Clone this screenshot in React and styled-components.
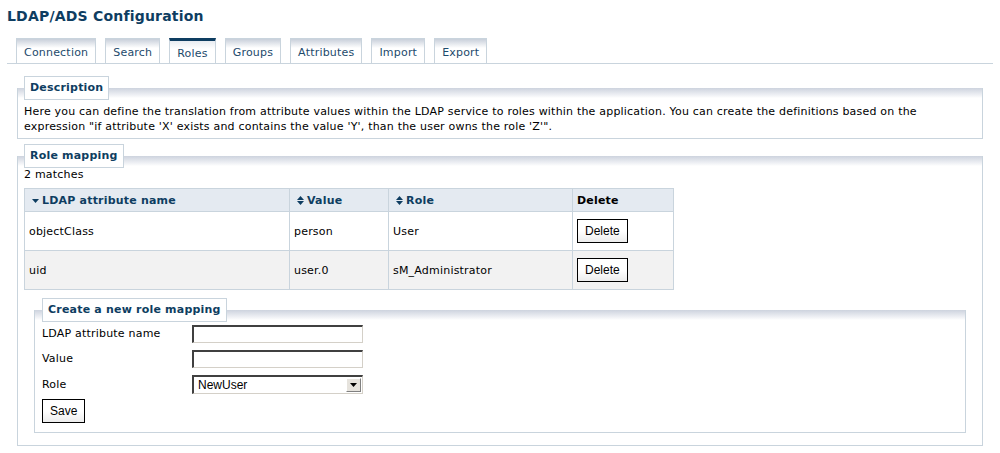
import React from "react";
import styled, { createGlobalStyle } from "styled-components";

const GlobalStyle = createGlobalStyle`
  body {
    margin: 0;
    background: #fff;
    font-family: "DejaVu Sans", Verdana, sans-serif;
    font-size: 11px;
    letter-spacing: 0.2px;
    color: #000;
  }
`;

const Page = styled.div`
  padding: 0 7px;
`;

const Title = styled.h1`
  margin: 0;
  padding-top: 7px;
  font-size: 14px;
  line-height: 18px;
  font-weight: bold;
  color: #0e3d61;
`;

const TabBar = styled.div`
  margin-top: 13px;
  display: flex;
  gap: 9px;
  padding-left: 9px;
  border-bottom: 1px solid #c9d4dd;
`;

const Tab = styled.div`
  height: 25px;
  box-sizing: border-box;
  padding: 3px 7px 0;
  display: flex;
  align-items: center;
  border: 1px solid #c9d4dd;
  border-bottom: 0;
  border-top: ${p => (p.$active ? "3px solid #0e3d61" : "1px solid #c9d4dd")};
  background: ${p =>
    p.$active
      ? "linear-gradient(#e8ecf1, #fff 8px)"
      : "linear-gradient(#c8cfda, #fff 9px)"};
  color: #1d4a6c;
`;

const Section = styled.div`
  margin-top: ${p => p.$top || 0}px;
  margin-left: ${p => p.$inset || 0}px;
  margin-right: ${p => p.$inset || 0}px;
`;

const Legend = styled.div`
  position: relative;
  z-index: 1;
  display: inline-block;
  margin-left: ${p => p.$shift || 7}px;
  height: 24px;
  box-sizing: border-box;
  padding: 0 5px;
  line-height: 22px;
  border: 1px solid #c9d4dd;
  background: #fff;
  font-weight: bold;
  color: #0e3d61;
  vertical-align: top;
`;

const Box = styled.div`
  margin-top: -12px;
  border: 1px solid #c9d4dd;
  border-top: 0;
  background: linear-gradient(#cdd3de, #f4f5f8 8px, #fff 10px);
  padding: ${p => p.$pad};
`;

const Text = styled.p`
  margin: 0;
  line-height: 15px;
  max-width: 900px;
`;

const Matches = styled.div`
  line-height: 14px;
`;

const Table = styled.table`
  margin-top: 6px;
  border-collapse: collapse;
  width: 650px;
`;

const Th = styled.th`
  width: ${p => p.$w}px;
  height: 22px;
  padding: 0 4px;
  text-align: left;
  background: #e4eaf1;
  border: 1px solid #c9d4dd;
  color: ${p => (p.$plain ? "#000" : "#0e3d61")};
  font-weight: bold;
  white-space: nowrap;
`;

const SortIcon = styled.svg`
  margin: 0 3px 0 3px;
  vertical-align: -1px;
`;

const Tr = styled.tr`
  background: ${p => (p.$alt ? "#f2f2f2" : "#fff")};
`;

const Td = styled.td`
  height: 38px;
  padding: 0 4px;
  border: 1px solid #c9d4dd;
`;

const Button = styled.button`
  height: 24px;
  padding: 0 7px;
  border: 1px solid #000;
  background: linear-gradient(#fff, #fff 50%, #ececec);
  font-family: "Liberation Sans", Arial, sans-serif;
  font-size: 12px;
  letter-spacing: 0;
  color: #000;
  border-radius: 0;
  margin-top: ${p => p.$top || 0}px;
`;

const Form = styled.div`
  display: grid;
  grid-template-columns: 150px 171px;
  row-gap: 7px;
  align-items: center;
`;

const Label = styled.label`
  line-height: 18px;
`;

const Input = styled.input`
  width: 171px;
  height: 18px;
  box-sizing: border-box;
  margin: 0;
  border-style: solid;
  border-width: 2px 1px 1px 2px;
  border-color: #404040 #d4d0c8 #d4d0c8 #404040;
  background: #fff;
  font-family: "Liberation Sans", Arial, sans-serif;
  font-size: 12px;
`;

const Select = styled.div`
  width: 171px;
  height: 19px;
  box-sizing: border-box;
  display: flex;
  align-items: center;
  border-style: solid;
  border-width: 2px 1px 1px 2px;
  border-color: #404040 #d4d0c8 #d4d0c8 #404040;
  background: #fff;
  font-family: "Liberation Sans", Arial, sans-serif;
  font-size: 12px;
  letter-spacing: 0;
  padding-left: 4px;
`;

const SelectValue = styled.span`
  flex: 1;
`;

const SelectArrow = styled.span`
  width: 15px;
  height: 14px;
  margin-right: 1px;
  box-sizing: border-box;
  display: flex;
  align-items: center;
  justify-content: center;
  background: #e6e3dd;
  border: 1px solid;
  border-color: #fff #808080 #808080 #fff;
`;

const tabs = ["Connection", "Search", "Roles", "Groups", "Attributes", "Import", "Export"];

const rows = [
  { attr: "objectClass", value: "person", role: "User" },
  { attr: "uid", value: "user.0", role: "sM_Administrator" }
];

function Sort({ down }) {
  return (
    <SortIcon width="7" height="9" viewBox="0 0 7 9">
      {down ? (
        <path d="M0 3h7L3.5 7z" fill="#0e3d61" />
      ) : (
        <>
          <path d="M0 4h7L3.5 0z" fill="#0e3d61" />
          <path d="M0 5h7L3.5 9z" fill="#0e3d61" />
        </>
      )}
    </SortIcon>
  );
}

export default function App() {
  return (
    <Page>
      <GlobalStyle />
      <Title>LDAP/ADS Configuration</Title>
      <TabBar>
        {tabs.map(t => (
          <Tab key={t} $active={t === "Roles"}>
            {t}
          </Tab>
        ))}
      </TabBar>

      <Section $top={12} $inset={10}>
        <Legend>Description</Legend>
        <Box $pad="16px 6px 4px 6px">
          <Text>
            Here you can define the translation from attribute values within the LDAP service to
            roles within the application. You can create the definitions based on the expression
            "if attribute 'X' exists and contains the value 'Y', than the user owns the role 'Z'".
          </Text>
        </Box>
      </Section>

      <Section $top={5} $inset={10}>
        <Legend>Role mapping</Legend>
        <Box $pad="12px 6px 12px 6px">
          <Matches>2 matches</Matches>
          <Table>
            <thead>
              <tr>
                <Th $w={256}>
                  <Sort down />
                  LDAP attribute name
                </Th>
                <Th $w={90}>
                  <Sort />
                  Value
                </Th>
                <Th $w={175}>
                  <Sort />
                  Role
                </Th>
                <Th $w={92} $plain>
                  Delete
                </Th>
              </tr>
            </thead>
            <tbody>
              {rows.map((r, i) => (
                <Tr key={r.attr} $alt={i % 2 === 1}>
                  <Td>{r.attr}</Td>
                  <Td>{r.value}</Td>
                  <Td>{r.role}</Td>
                  <Td>
                    <Button>Delete</Button>
                  </Td>
                </Tr>
              ))}
            </tbody>
          </Table>

          <Section $top={8} $inset={10}>
            <Legend $shift={8}>Create a new role mapping</Legend>
            <Box $pad="15px 7px 9px 7px">
              <Form>
                <Label>LDAP attribute name</Label>
                <Input type="text" />
                <Label>Value</Label>
                <Input type="text" />
                <Label>Role</Label>
                <Select>
                  <SelectValue>NewUser</SelectValue>
                  <SelectArrow>
                    <svg width="7" height="4" viewBox="0 0 7 4">
                      <path d="M0 0h7L3.5 4z" fill="#000" />
                    </svg>
                  </SelectArrow>
                </Select>
              </Form>
              <Button $top={5}>Save</Button>
            </Box>
          </Section>
        </Box>
      </Section>
    </Page>
  );
}
